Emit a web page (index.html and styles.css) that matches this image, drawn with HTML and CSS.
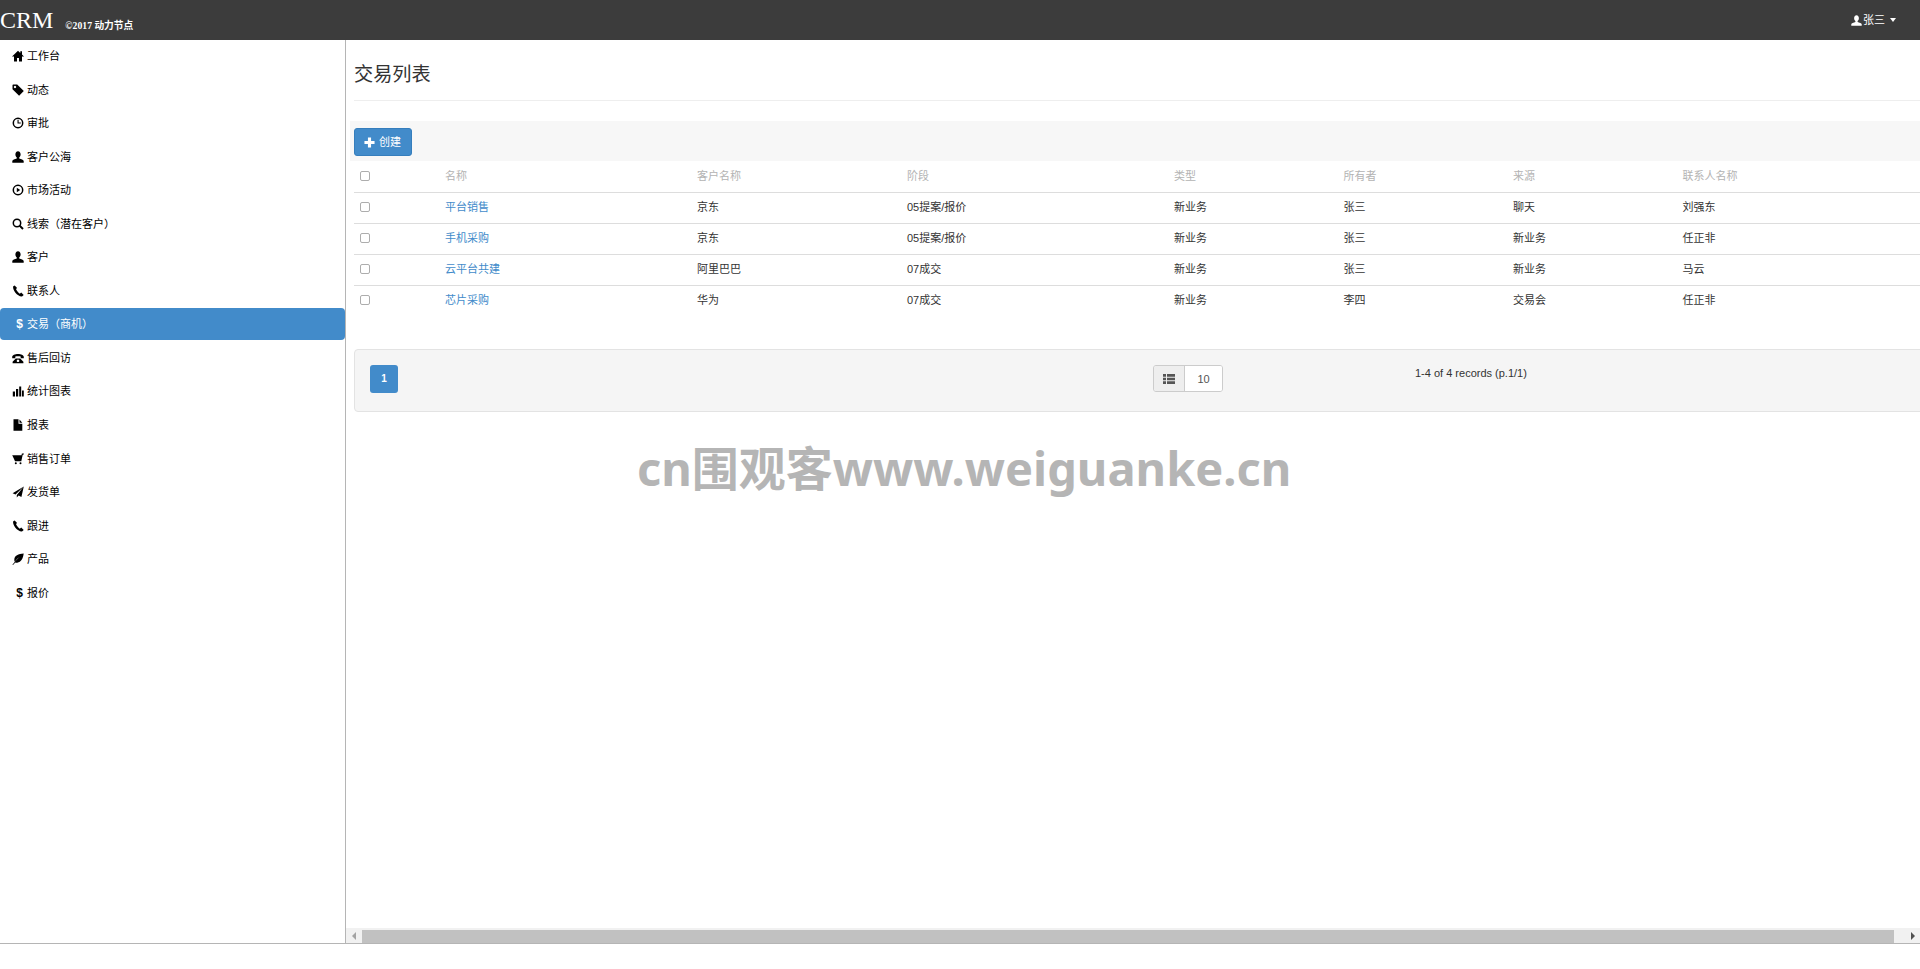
FILE: index.html
```html
<!DOCTYPE html>
<html lang="zh-CN">
<head>
<meta charset="utf-8">
<title>CRM</title>
<link rel="stylesheet" href="styles.css">
</head>
<body>
<svg class="defs" width="0" height="0" aria-hidden="true">
  <symbol id="i-home" viewBox="0 0 12 12"><path d="M6 .8 .3 6.2l.7.8L2 6.1V11.500h3V8h2v3.500h3V6.100L11 7l.7-.8L10 4.600V1.300H8.300v1.700z"/></symbol>
  <symbol id="i-tag" viewBox="0 0 12 12"><path fill-rule="evenodd" d="M1.300.5H5.200L11.800 7.100 7.100 11.800.5 5.200V1.300Q.5.500 1.300.5ZM3 1.800a1.200 1.200 0 1 0 .01 0Z"/></symbol>
  <symbol id="i-time" viewBox="0 0 12 12"><circle cx="6" cy="6" r="4.700" fill="none" stroke="currentColor" stroke-width="1.500"/><path d="M5.500 2.800h1.100v2.700h2.200v1.100H5.500z"/></symbol>
  <symbol id="i-user" viewBox="0 0 12 12"><path d="M6 .3C4.300.3 3.400 1.800 3.400 3.500c0 1.400.7 2.500 1.400 3.100v.9C3 8.300.3 8.700.3 10v1.700h11.400V10c0-1.300-2.700-1.700-4.500-2.500v-.9c.7-.6 1.400-1.700 1.400-3.100C8.600 1.800 7.700.3 6 .3z"/></symbol>
  <symbol id="i-play" viewBox="0 0 12 12"><circle cx="6" cy="6" r="4.700" fill="none" stroke="currentColor" stroke-width="1.500"/><path d="M4.800 3.800 8.200 6 4.800 8.200z"/></symbol>
  <symbol id="i-search" viewBox="0 0 12 12"><circle cx="5" cy="5" r="3.700" fill="none" stroke="currentColor" stroke-width="1.500"/><path d="M7.600 7.600 11 11" fill="none" stroke="currentColor" stroke-width="2"/></symbol>
  <symbol id="i-phone" viewBox="0 0 12 12"><path d="M2.700.4 1.200 1.300C.2 5 5.500 11.800 10 11.500l1.700-1.500L9.200 7.600 7.800 8.700C6.200 7.600 4.600 5.700 4 4.100l1.100-1z"/></symbol>
  <symbol id="i-phonealt" viewBox="0 0 12 12"><path fill-rule="evenodd" d="M.2 5C.2 1 11.800 1 11.800 5v1.200H8.700V4.600C7.500 4.100 4.500 4.100 3.300 4.600v1.600H.2zM.6 11.300v-1.500L3.800 6.500h4.400l3.200 3.300v1.500zM6 7.500a1.300 1.300 0 1 0 .01 0Z"/></symbol>
  <symbol id="i-stats" viewBox="0 0 12 12"><path d="M.8 6.500h2.200v5H.8zM4 4h2.200v7.500H4zM7.200 1.500h2v10h-2zM10 5.500h1.800v6H10z"/></symbol>
  <symbol id="i-file" viewBox="0 0 12 12"><path d="M1.500.3h5v4.400h3.800v7H1.500zM7.500.5l2.800 3.200H7.500z"/></symbol>
  <symbol id="i-cart" viewBox="0 0 12 12"><path d="M.2 2.200h9.300l.4-1.700h2l-.2 1-1 .2L9.300 8.300H3L1.800 5.600z"/><circle cx="3.800" cy="10.300" r="1"/><circle cx="8.500" cy="10.300" r="1"/></symbol>
  <symbol id="i-send" viewBox="0 0 12 12"><path d="M11.800.4.600 7.300l2.900 1.100zM11.800.4 4.800 9v2.600l1.800-2 2.800 1.300z"/></symbol>
  <symbol id="i-leaf" viewBox="0 0 12 12"><path d="M11.700.6C6.500 1 2.300 2.600 2.300 7c0 .7.200 1.300.5 1.800C4.300 6.500 6 5 8 3.800 6 5.300 3.700 7.700.4 11.700l.6.3 2.300-2.600c.5.300 1.200.4 1.900.3C9.300 9.200 11 5.500 11.700.6z"/></symbol>
  <symbol id="i-plus" viewBox="0 0 12 12"><path d="M4.300.5h3.400v3.800h3.800v3.400H7.700v3.800H4.300V7.700H.5V4.300h3.800z"/></symbol>
  <symbol id="i-list" viewBox="0 0 12 12"><path d="M0 1h3v2.800H0zM4 1h8v2.800H4zM0 4.700h3v2.600H0zM4 4.700h8v2.600H4zM0 8.200h3V11H0zM4 8.200h8V11H4z"/></symbol>
</svg>

<header class="topbar">
  <div class="brand"><span class="brand-name">CRM</span><span class="brand-sub">©2017 动力节点</span></div>
  <div class="user"><svg class="ico"><use href="#i-user"/></svg><span>张三</span><span class="caret"></span></div>
</header>

<div class="layout">
  <nav class="sidebar">
    <ul class="nav">
      <li><a class="nav-link"><svg class="ico"><use href="#i-home"/></svg>工作台</a></li>
      <li><a class="nav-link"><svg class="ico"><use href="#i-tag"/></svg>动态</a></li>
      <li><a class="nav-link"><svg class="ico"><use href="#i-time"/></svg>审批</a></li>
      <li><a class="nav-link"><svg class="ico"><use href="#i-user"/></svg>客户公海</a></li>
      <li><a class="nav-link"><svg class="ico"><use href="#i-play"/></svg>市场活动</a></li>
      <li><a class="nav-link"><svg class="ico"><use href="#i-search"/></svg>线索（潜在客户）</a></li>
      <li><a class="nav-link"><svg class="ico"><use href="#i-user"/></svg>客户</a></li>
      <li><a class="nav-link"><svg class="ico"><use href="#i-phone"/></svg>联系人</a></li>
      <li><a class="nav-link active"><span class="usd">$</span>交易（商机）</a></li>
      <li><a class="nav-link"><svg class="ico"><use href="#i-phonealt"/></svg>售后回访</a></li>
      <li><a class="nav-link"><svg class="ico"><use href="#i-stats"/></svg>统计图表</a></li>
      <li><a class="nav-link"><svg class="ico"><use href="#i-file"/></svg>报表</a></li>
      <li><a class="nav-link"><svg class="ico"><use href="#i-cart"/></svg>销售订单</a></li>
      <li><a class="nav-link"><svg class="ico"><use href="#i-send"/></svg>发货单</a></li>
      <li><a class="nav-link"><svg class="ico"><use href="#i-phone"/></svg>跟进</a></li>
      <li><a class="nav-link"><svg class="ico"><use href="#i-leaf"/></svg>产品</a></li>
      <li><a class="nav-link"><span class="usd">$</span>报价</a></li>
    </ul>
  </nav>

  <main class="main">
    <div class="content">
      <div class="page-head"><h1 class="page-title">交易列表</h1></div>
      <div class="toolbar">
        <button class="btn-primary" type="button"><svg class="ico"><use href="#i-plus"/></svg>创建</button>
      </div>
      <table class="grid">
        <colgroup>
          <col class="c-check"><col class="c-name"><col class="c-cust"><col class="c-stage">
          <col class="c-mid"><col class="c-mid"><col class="c-mid"><col class="c-last">
        </colgroup>
        <thead>
          <tr><th><input class="check" type="checkbox"></th><th>名称</th><th>客户名称</th><th>阶段</th><th>类型</th><th>所有者</th><th>来源</th><th>联系人名称</th></tr>
        </thead>
        <tbody>
          <tr><td><input class="check" type="checkbox"></td><td><a class="link">平台销售</a></td><td>京东</td><td>05提案/报价</td><td>新业务</td><td>张三</td><td>聊天</td><td>刘强东</td></tr>
          <tr><td><input class="check" type="checkbox"></td><td><a class="link">手机采购</a></td><td>京东</td><td>05提案/报价</td><td>新业务</td><td>张三</td><td>新业务</td><td>任正非</td></tr>
          <tr><td><input class="check" type="checkbox"></td><td><a class="link">云平台共建</a></td><td>阿里巴巴</td><td>07成交</td><td>新业务</td><td>张三</td><td>新业务</td><td>马云</td></tr>
          <tr><td><input class="check" type="checkbox"></td><td><a class="link">芯片采购</a></td><td>华为</td><td>07成交</td><td>新业务</td><td>李四</td><td>交易会</td><td>任正非</td></tr>
        </tbody>
      </table>
      <div class="pager">
        <div><span class="page-num">1</span></div>
        <div class="page-size">
          <span class="size-addon"><svg class="ico-list"><use href="#i-list"/></svg></span>
          <span class="size-value">10</span>
        </div>
        <div class="records">1-4 of 4 records (p.1/1)</div>
      </div>
    </div>
    <div class="hscroll">
      <span class="hs-left"><i class="arrow-left"></i></span>
      <span class="hs-thumb"></span>
      <span class="hs-right"><i class="arrow-right"></i></span>
    </div>
  </main>
</div>

<div class="watermark">cn围观客www.weiguanke.cn</div>
</body>
</html>
```

FILE: styles.css
```css
* { box-sizing: border-box; }
html, body { margin: 0; height: 969px; overflow: hidden; background: #fff; }
body {
  position: relative;
  font-family: "Liberation Sans", "Noto Sans CJK SC", sans-serif;
  font-size: 11px;
  line-height: 16px;
  color: #333;
}
.defs { position: absolute; }
.ico { width: 11px; height: 11px; fill: currentColor; flex: none; }

.topbar {
  height: 40px;
  background: #3c3c3c;
  color: #fff;
  display: flex;
  justify-content: space-between;
  align-items: center;
}
.brand { display: flex; align-items: flex-end; font-family: "Liberation Serif", "Noto Sans CJK SC", serif; }
.brand-name { font-size: 24px; line-height: 40px; margin-right: 12px; }
.brand-sub { font-size: 9.700px; font-weight: bold; padding-bottom: 6px; }
.user { display: flex; align-items: center; padding-right: 24px; gap: 1px; }
.caret {
  margin-left: 4px;
  border-top: 4px solid #fff;
  border-left: 3.500px solid transparent;
  border-right: 3.500px solid transparent;
}

.layout { display: flex; height: 904px; border-bottom: 1px solid #b5b5b5; }
.sidebar { width: 346px; flex: none; border-right: 1px solid #b5b5b5; }
.nav { list-style: none; margin: 0; padding: 0; display: flex; flex-direction: column; gap: 1.550px; }
.nav-link {
  display: flex;
  align-items: center;
  height: 32px;
  padding-left: 12px;
  gap: 3px;
  color: #000;
  border-radius: 4px;
}
.nav-link .ico { width: 12px; height: 12px; }
.nav-link.active { background: #428bca; color: #fff; }
.usd { width: 12px; text-align: right; font-size: 12px; font-weight: bold; padding-right: 1px; }

.main { flex: 1; min-width: 0; display: flex; flex-direction: column; }
.content { flex: 1; min-height: 0; overflow: hidden; padding-left: 8px; }
.page-head { width: 1600px; height: 61px; padding-top: 25px; border-bottom: 1px solid #eee; }
.page-title { margin: 0; font-size: 19.200px; line-height: 20px; font-weight: 400; color: #333; }
.toolbar {
  width: 1600px;
  height: 40px;
  margin: 20px 0 0 -4px;
  padding: 7px 0 0 4px;
  background: #f7f7f7;
}
.btn-primary {
  display: flex;
  align-items: center;
  gap: 4px;
  height: 28px;
  padding: 0 10px 0 9px;
  background: #428bca;
  border: 1px solid #357ebd;
  border-radius: 3px;
  color: #fff;
  font: inherit;
}

.grid { width: 1596px; table-layout: fixed; border-collapse: collapse; }
.c-check { width: 83px; }
.c-name { width: 252px; }
.c-cust { width: 210px; }
.c-stage { width: 267px; }
.c-mid { width: 169.500px; }
.c-last { width: 275.500px; }
.grid th, .grid td { height: 31px; padding: 0 8px; text-align: left; font-weight: 400; vertical-align: middle; }
.grid td { padding-bottom: 1px; }
.grid th { color: #b3b3b3; border-bottom: 1px solid #ddd; }
.grid tbody tr + tr td { border-top: 1px solid #ddd; }
.link { color: #428bca; }
.check {
  appearance: none;
  display: block;
  width: 10px;
  height: 10px;
  margin: 0 0 0 -2px;
  border: 1px solid #adadad;
  border-radius: 2px;
  background: #fff;
}

.pager {
  width: 1600px;
  height: 63px;
  margin-top: 33px;
  padding: 15px;
  display: grid;
  grid-template-columns: 783px 262px 1fr;
  background: #f5f5f5;
  border: 1px solid #e3e3e3;
  border-radius: 4px;
}
.page-num {
  display: flex;
  align-items: center;
  justify-content: center;
  width: 28px;
  height: 28px;
  background: #428bca;
  border-radius: 3px;
  color: #fff;
  font-size: 10px;
  font-weight: bold;
}
.page-size { display: flex; width: 70px; height: 27px; border: 1px solid #ccc; border-radius: 3px; overflow: hidden; }
.size-addon { width: 31px; display: flex; align-items: center; justify-content: center; background: #eee; border-right: 1px solid #ccc; }
.ico-list { width: 12px; height: 12px; fill: #555; }
.size-value { flex: 1; display: flex; align-items: center; justify-content: center; background: #fff; color: #555; }
.records { color: #333; }

.hscroll { height: 15px; flex: none; display: flex; background: #f1f1f1; }
.hs-left { width: 16px; display: flex; align-items: center; justify-content: center; }
.hs-thumb { width: 1532px; height: 13px; margin-top: 2px; background: #c1c1c1; }
.hs-right { flex: 1; display: flex; align-items: center; justify-content: flex-end; padding-right: 5px; }
.arrow-left { border-right: 4px solid #a3a3a3; border-top: 4px solid transparent; border-bottom: 4px solid transparent; }
.arrow-right { border-left: 4px solid #505050; border-top: 4px solid transparent; border-bottom: 4px solid transparent; }

.watermark {
  position: absolute;
  left: 637px;
  top: 436px;
  font-family: "Noto Sans", "Noto Sans CJK SC", sans-serif;
  font-weight: bold;
  font-size: 47px;
  line-height: 64px;
  color: #b5b5b5;
  white-space: nowrap;
}
```
